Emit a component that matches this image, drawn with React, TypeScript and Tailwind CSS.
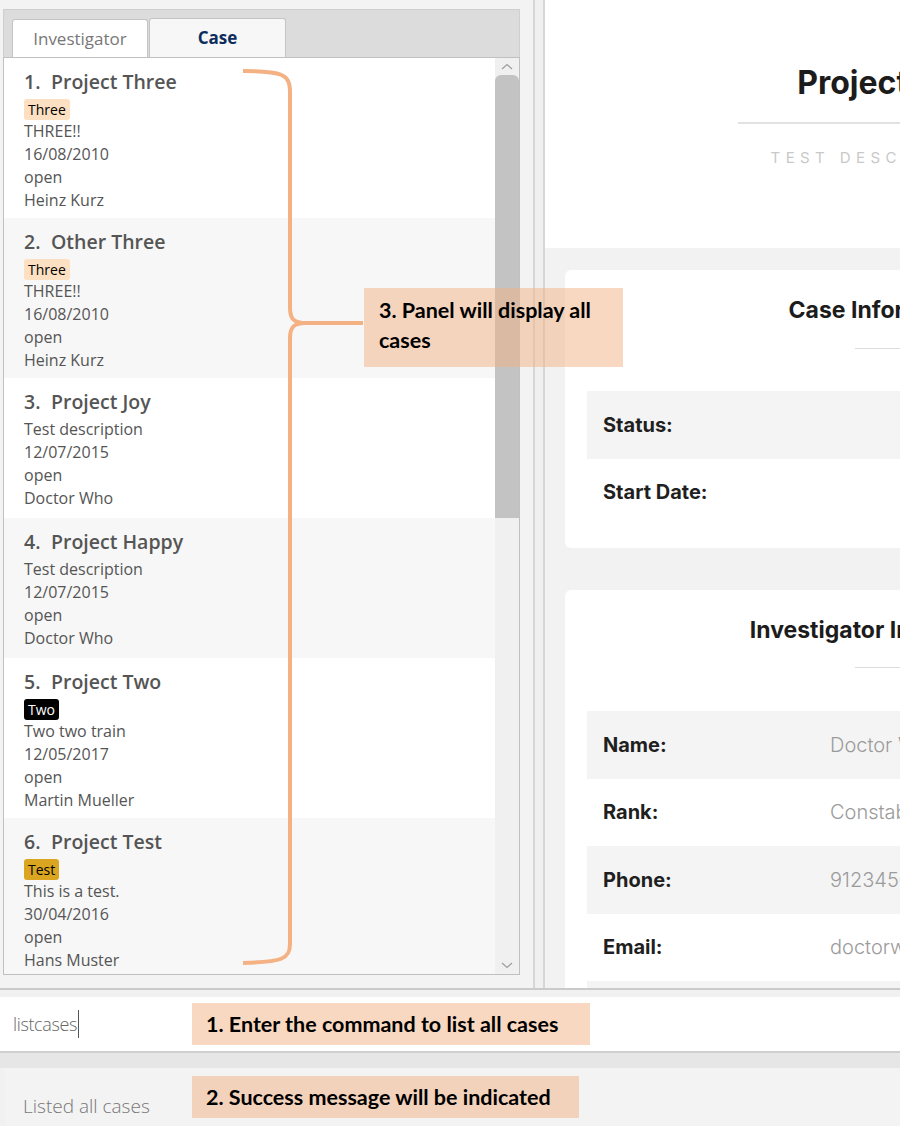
import React from 'react';

type Tag = { label: string; className: string };

interface CaseItem {
	id: number;
	title: string;
	tag?: Tag;
	description: string;
	date: string;
	status: string;
	investigator: string;
}

const cases: CaseItem[] = [
	{
		id: 1,
		title: 'Project Three',
		tag: { label: 'Three', className: 'bg-[#fde0c2] text-black' },
		description: 'THREE!!',
		date: '16/08/2010',
		status: 'open',
		investigator: 'Heinz Kurz',
	},
	{
		id: 2,
		title: 'Other Three',
		tag: { label: 'Three', className: 'bg-[#fde0c2] text-black' },
		description: 'THREE!!',
		date: '16/08/2010',
		status: 'open',
		investigator: 'Heinz Kurz',
	},
	{
		id: 3,
		title: 'Project Joy',
		description: 'Test description',
		date: '12/07/2015',
		status: 'open',
		investigator: 'Doctor Who',
	},
	{
		id: 4,
		title: 'Project Happy',
		description: 'Test description',
		date: '12/07/2015',
		status: 'open',
		investigator: 'Doctor Who',
	},
	{
		id: 5,
		title: 'Project Two',
		tag: { label: 'Two', className: 'bg-black text-white' },
		description: 'Two two train',
		date: '12/05/2017',
		status: 'open',
		investigator: 'Martin Mueller',
	},
	{
		id: 6,
		title: 'Project Test',
		tag: { label: 'Test', className: 'bg-[#daa520] text-black' },
		description: 'This is a test.',
		date: '30/04/2016',
		status: 'open',
		investigator: 'Hans Muster',
	},
];

const investigatorRows = [
	{ label: 'Name:', value: 'Doctor Who' },
	{ label: 'Rank:', value: 'Constable' },
	{ label: 'Phone:', value: '91234567' },
	{ label: 'Email:', value: 'doctorwho@example.com' },
	{ label: 'Cases:', value: 'Project Joy' },
];

function CaseCard({ item, index }: { item: CaseItem; index: number }) {
	return (
		<div
			className={`pl-[20px] pt-[10px] text-[#555] ${item.tag ? 'pb-[6px]' : 'pb-[8px]'} ${
				index % 2 === 1 ? 'bg-[#f7f7f7]' : 'bg-white'
			}`}
		>
			<div className="h-[28px] leading-[28px] mb-[2px] text-[19.5px] font-semibold">
				<span className="inline-block w-[27px]">{item.id}.</span>
				{item.title}
			</div>
			{item.tag && (
				<div className="h-[22px] flex items-center">
					<span
						className={`px-[4px] h-[21px] leading-[21px] text-[14px] rounded-[3px] ${item.tag.className}`}
					>
						{item.tag.label}
					</span>
				</div>
			)}
			<div className="text-[16px] leading-[23px]">
				<div>{item.description}</div>
				<div>{item.date}</div>
				<div>{item.status}</div>
				<div>{item.investigator}</div>
			</div>
		</div>
	);
}

function Scrollbar() {
	return (
		<div className="w-[24px] bg-[#f0f0f0] flex flex-col items-center">
			<div className="h-[17px] flex items-center justify-center">
				<svg width="12" height="7" viewBox="0 0 12 7">
					<path d="M1 6 L6 1.5 L11 6" fill="none" stroke="#a0a0a0" strokeWidth="1.3" />
				</svg>
			</div>
			<div className="w-[24px] h-[443px] bg-[#c3c3c3] rounded-t-[6px]" />
			<div className="flex-1" />
			<div className="h-[17px] flex items-center justify-center">
				<svg width="12" height="7" viewBox="0 0 12 7">
					<path d="M1 1 L6 5.5 L11 1" fill="none" stroke="#a0a0a0" strokeWidth="1.3" />
				</svg>
			</div>
		</div>
	);
}

function InfoRow({ label, value, shaded, labelWidth }: { label: string; value?: string; shaded: boolean; labelWidth: string }) {
	return (
		<div className={`flex items-center h-[67.5px] pl-[16px] whitespace-nowrap ${shaded ? 'bg-[#f4f4f4]' : 'bg-white'}`}>
			<div className={`${labelWidth} shrink-0 text-[20px] font-bold text-[#1f1f1f]`}>{label}</div>
			<div className="text-[20px] font-light text-[#9b9b9b]">{value}</div>
		</div>
	);
}

export default function App() {
	const sans = { fontFamily: '"Open Sans", "Noto Sans", sans-serif' };
	const note = { fontFamily: 'Lato, "Open Sans", sans-serif' };

	return (
		<div
			className="relative w-[900px] h-[1126px] overflow-hidden bg-[#f3f3f3]"
			style={sans}
		>
			<div className="flex h-[988px]">
				{/* left: tabbed case list */}
				<div className="w-[533px] shrink-0 pl-[3px] pr-[13px] pt-[9px]">
					<div className="bg-[#dcdcdc] h-[48px] flex items-end gap-[1px] pl-[8px] border-t border-x border-[#cfcfcf]">
						<div className="w-[136px] h-[38px] bg-white border border-b-0 border-[#c4c4c4] rounded-t-[3px] flex items-center justify-center text-[17px] text-[#777]">
							Investigator
						</div>
						<div className="w-[137px] h-[39px] bg-[#f7f7f7] border border-b-0 border-[#c4c4c4] rounded-t-[3px] flex items-center justify-center text-[17px] font-bold text-[#0d2d5c]">
							Case
						</div>
					</div>
					<div className="h-[918px] flex border border-[#c0c0c0] bg-white overflow-hidden">
						<div className="flex-1 overflow-hidden">
							{cases.map((c, i) => (
								<CaseCard key={c.id} item={c} index={i} />
							))}
						</div>
						<Scrollbar />
					</div>
				</div>

				{/* split pane divider */}
				<div className="w-[12px] shrink-0 border-l-2 border-r-2 border-[#d6d6d6] bg-[#f0f0f0]" />

				{/* right: case details */}
				<div
					className="flex-1 overflow-hidden bg-[#f2f2f2]"
					style={{ fontFamily: 'Inter, "Noto Sans", sans-serif' }}
				>
					<div className="w-[680px]">
						<div className="h-[248px] bg-white flex flex-col items-center pt-[63px]">
							<div className="h-[40px] leading-[40px] text-[32px] font-bold text-[#1c1c1c]">
								Project Joy
							</div>
							<div className="w-[294px] h-[2px] bg-[#e2e2e2] mt-[19px]" />
							<div className="mt-[25px] h-[18px] leading-[18px] text-[15px] tracking-[0.36em] text-[#c9c9c9] uppercase">
								Test description
							</div>
						</div>

						<div className="px-[20px] pt-[22px] flex flex-col gap-[42px]">
							<div className="bg-white rounded-[6px] px-[22px] pt-[24px] pb-[22px]">
								<div className="flex flex-col items-center">
									<div className="h-[32px] leading-[32px] text-[23px] font-bold text-[#1c1c1c]">
										Case Information
									</div>
									<div className="w-[60px] h-[1px] bg-[#dcdcdc] mt-[22px]" />
								</div>
								<div className="mt-[42px]">
									<InfoRow label="Status:" value="open" shaded labelWidth="w-[360px]" />
									<InfoRow label="Start Date:" value="12/07/2015" shaded={false} labelWidth="w-[360px]" />
								</div>
							</div>

							<div className="bg-white rounded-[6px] px-[22px] pt-[24px]">
								<div className="flex flex-col items-center">
									<div className="h-[32px] leading-[32px] text-[23px] font-bold text-[#1c1c1c]">
										Investigator Information
									</div>
									<div className="w-[60px] h-[1px] bg-[#dcdcdc] mt-[21px]" />
								</div>
								<div className="mt-[43px]">
									{investigatorRows.map((r, i) => (
										<InfoRow
											key={r.label}
											label={r.label}
											value={r.value}
											shaded={i % 2 === 0}
											labelWidth="w-[227px]"
										/>
									))}
								</div>
							</div>
						</div>
					</div>
				</div>
			</div>

			{/* command box + result display */}
			<div className="border-t-2 border-[#cacaca] pt-[7px] bg-[#f1f1f1]">
				<div className="h-[56px] bg-white border-b-2 border-[#cfcfcf] flex items-center pl-[13px]">
					<span className="text-[18px] font-light text-[#666] tracking-[-0.02em]">listcases</span>
					<span className="w-[1px] h-[28px] bg-[#555] ml-[1px]" />
				</div>
				<div className="h-[15px] bg-[#e6e6e6]" />
				<div className="ml-[5px] h-[60px] bg-[#f3f3f3] flex items-end pb-[8px] pl-[18px]">
					<span className="text-[19px] font-light text-[#777]">Listed all cases</span>
				</div>
			</div>

			{/* annotations */}
			<svg className="absolute left-0 top-0 pointer-events-none" width="900" height="1126">
				<path
					d="M243 71 C282 71 290 74 290 92 L290 308 C290 319 294 323 306 323 L363 323 M306 323 C294 323 290 327 290 338 L290 944 C290 959 282 962 243 963"
					fill="none"
					stroke="#f4b183"
					strokeWidth="4"
				/>
			</svg>
			<div
				className="absolute left-[364px] top-[288px] w-[259px] h-[79px] bg-[rgba(244,177,131,0.5)] px-[15px] pt-[7px] text-[21.5px] leading-[30px] font-bold text-black"
				style={note}
			>
				3. Panel will display all cases
			</div>
			<div
				className="absolute left-[192px] top-[1003px] w-[398px] h-[42px] bg-[rgba(244,177,131,0.5)] pl-[14px] flex items-center text-[21.5px] font-bold text-black"
				style={note}
			>
				1. Enter the command to list all cases
			</div>
			<div
				className="absolute left-[192px] top-[1076px] w-[387px] h-[42px] bg-[rgba(244,177,131,0.5)] pl-[14px] flex items-center text-[21.5px] font-bold text-black"
				style={note}
			>
				2. Success message will be indicated
			</div>
		</div>
	);
}
